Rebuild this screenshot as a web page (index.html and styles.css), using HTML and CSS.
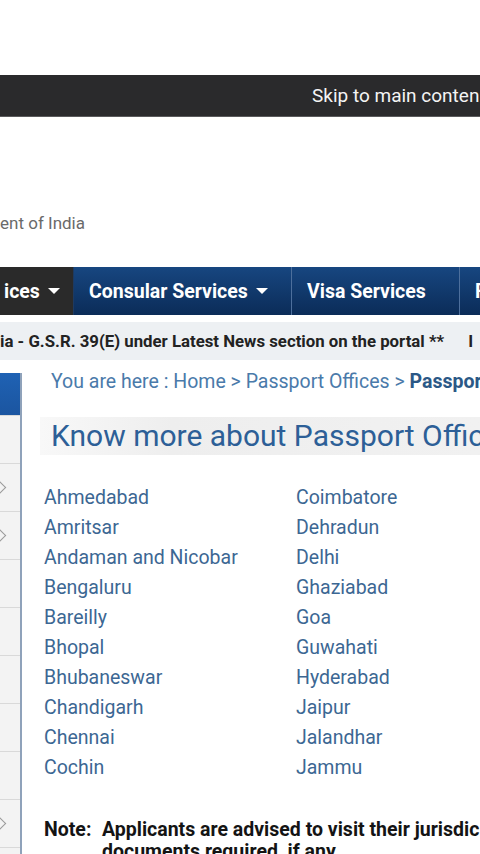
FILE: index.html
```html
<!DOCTYPE html>
<html lang="en">
<head>
    <meta charset="UTF-8">
    <meta name="viewport" content="width=device-width, initial-scale=1.0">
    <title>Passport Offices</title>
    <link rel="stylesheet" href="styles.css">
</head>
<body>
    <div class="skip-bar">
        <a href="#main" class="skip-link">Skip to main conten</a>
    </div>

    <div class="brand">
        <p class="brand-sub">ent of India</p>
    </div>

    <nav class="nav">
        <a class="nav-item dark w-offices" href="#">ices <span class="caret"></span></a>
        <a class="nav-item w-consular" href="#">Consular Services <span class="caret"></span></a>
        <a class="nav-item w-visa" href="#">Visa Services</a>
        <a class="nav-item" href="#">F</a>
    </nav>

    <div class="ticker">
        <span class="ticker-text">ia - G.S.R. 39(E) under Latest News section on the portal **<span class="next-news">I</span></span>
    </div>

    <div class="main" id="main">
        <aside class="sidebar">
            <div class="side-head"></div>
            <div class="side-item"></div>
            <div class="side-item has-sub"></div>
            <div class="side-item has-sub"></div>
            <div class="side-item"></div>
            <div class="side-item"></div>
            <div class="side-item"></div>
            <div class="side-item"></div>
            <div class="side-item"></div>
            <div class="side-item has-sub"></div>
            <div class="side-item"></div>
        </aside>

        <section class="content">
            <div class="crumbs">
                You are here : <a href="#">Home</a> &gt; <a href="#">Passport Offices</a> &gt; <b>Passpor</b>
            </div>

            <h1 class="title">Know more about Passport Offic</h1>

            <div class="cities">
                <a href="#">Ahmedabad</a>
                <a href="#">Coimbatore</a>
                <a href="#">Amritsar</a>
                <a href="#">Dehradun</a>
                <a href="#">Andaman and Nicobar</a>
                <a href="#">Delhi</a>
                <a href="#">Bengaluru</a>
                <a href="#">Ghaziabad</a>
                <a href="#">Bareilly</a>
                <a href="#">Goa</a>
                <a href="#">Bhopal</a>
                <a href="#">Guwahati</a>
                <a href="#">Bhubaneswar</a>
                <a href="#">Hyderabad</a>
                <a href="#">Chandigarh</a>
                <a href="#">Jaipur</a>
                <a href="#">Chennai</a>
                <a href="#">Jalandhar</a>
                <a href="#">Cochin</a>
                <a href="#">Jammu</a>
            </div>

            <div class="note">
                <span class="note-label">Note:</span>
                <span class="note-text">Applicants are advised to visit their jurisdic<br>documents required, if any</span>
            </div>
        </section>
    </div>
</body>
</html>
```

FILE: styles.css
```css
body {
    margin: 0;
    width: 480px;
    overflow: hidden;
    font-family: Roboto, "Liberation Sans", sans-serif;
    background: #fff;
}
a {
    text-decoration: none;
    color: inherit;
}

.skip-bar {
    margin-top: 75px;
    height: 41px;
    background: #2a2a2c;
    border-bottom: 1px solid #5a5a5c;
    padding-left: 312px;
    white-space: nowrap;
    overflow: hidden;
}
.skip-link {
    display: block;
    line-height: 41px;
    font-size: 19px;
    color: #f4f4f4;
}

.brand {
    height: 150px;
}
.brand-sub {
    margin: 0;
    padding-top: 96px;
    font-size: 17px;
    line-height: 20px;
    color: #6a6a6a;
}

/* main menu */
.nav {
    display: flex;
    height: 48px;
    background: linear-gradient(#174680, #0b2c58);
    white-space: nowrap;
    overflow: hidden;
}
.nav-item {
    flex: none;
    display: flex;
    align-items: center;
    padding-left: 15px;
    font-size: 19.5px;
    font-weight: bold;
    color: #fff;
    border-right: 1px solid #4d6f9c;
}
.nav-item.dark {
    background: #2a2a2a;
    border-right: 1px solid #1e3a60;
    padding-left: 4px;
}
.w-offices { width: 69px; }
.w-consular { width: 202px; }
.w-visa { width: 152px; }
.caret {
    display: inline-block;
    margin-left: 8px;
    border-left: 6px solid transparent;
    border-right: 6px solid transparent;
    border-top: 6px solid #fff;
}

.ticker {
    margin-top: 7px;
    height: 38px;
    background: #edf0f3;
    white-space: nowrap;
    overflow: hidden;
}
.ticker-text {
    display: block;
    line-height: 38px;
    font-size: 16.8px;
    font-weight: bold;
    color: #222;
}
.next-news {
    margin-left: 24px;
}

/* sidebar + content */
.main {
    display: flex;
}
.sidebar {
    flex: none;
    width: 20px;
    margin-top: 13px;
    border-right: 2px solid #8fa2ba;
    background: #f3f3f3;
}
.side-head {
    height: 42px;
    background: linear-gradient(#1f62b4, #1b55a0);
}
.side-item {
    height: 47px;
    border-bottom: 1px solid #d9d9d9;
    position: relative;
}
.side-item:nth-child(2) {
    border-top: 1px solid #d9d9d9;
}
.has-sub::after {
    content: '';
    position: absolute;
    right: 16px;
    top: 18px;
    width: 10px;
    height: 10px;
    border-top: 1.5px solid #9a9a9a;
    border-right: 1.5px solid #9a9a9a;
    transform: rotate(45deg);
}

.content {
    flex: 1;
    min-width: 0;
    padding-left: 18px;
    white-space: nowrap;
    overflow: hidden;
}
.crumbs {
    margin-top: 10px;
    padding-left: 11px;
    font-size: 19.5px;
    line-height: 24px;
    color: #4a7aaa;
}
.crumbs b {
    color: #2b5886;
}
.title {
    margin: 23px 0 0;
    height: 38px;
    padding-left: 11px;
    font-size: 30px;
    font-weight: normal;
    line-height: 38px;
    color: #2d5f97;
    background: linear-gradient(to right, #f8f8f8, #eeeeee 30%, #f1f1f1);
}
.cities {
    display: grid;
    grid-template-columns: 252px 1fr;
    margin-top: 28px;
    padding-left: 4px;
}
.cities a {
    font-size: 19.5px;
    line-height: 30px;
    color: #3c6793;
}
.note {
    display: flex;
    margin-top: 36px;
    padding-left: 4px;
    font-size: 19.5px;
    font-weight: bold;
    line-height: 22px;
    color: #141414;
}
.note-label {
    flex: none;
    width: 58px;
}
```
